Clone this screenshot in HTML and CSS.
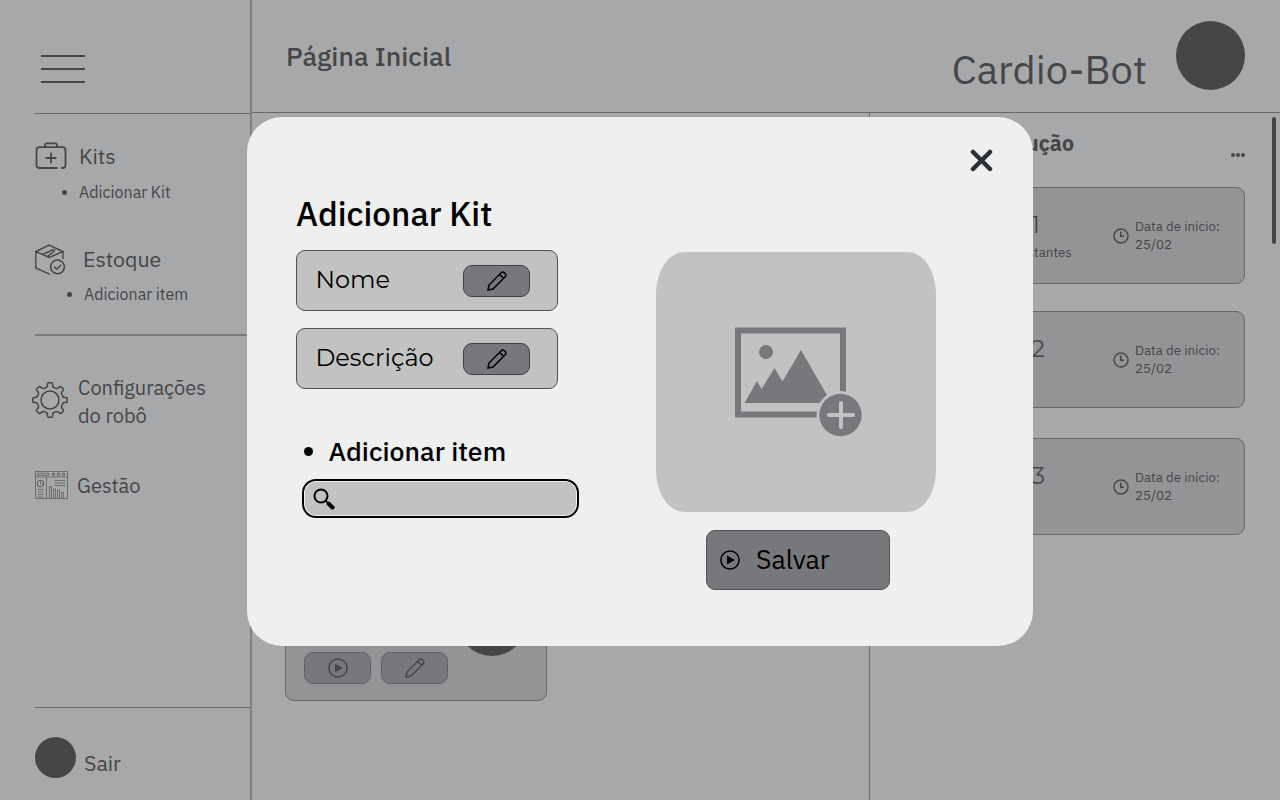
FILE: index.html
```html
<!DOCTYPE html>
<html lang="pt-BR">
<head>
<meta charset="utf-8">
<title>Cardio-Bot</title>
<link rel="stylesheet" href="styles.css">
</head>
<body>
<svg class="sprite" width="0" height="0" aria-hidden="true">
  <symbol id="pencil" viewBox="0 0 20 20"><path d="M1 19l1-5L14.2 1.8a2.2 2.2 0 0 1 3.2 0l.8.8a2.2 2.2 0 0 1 0 3.2L6 18l-5 1zM12.6 3.4l4 4"/></symbol>
  <symbol id="play" viewBox="0 0 20 20"><circle cx="10" cy="10" r="9.1"/><path class="solid" d="M7 5.6v8.8l8-4.4z"/></symbol>
  <symbol id="clock" viewBox="0 0 16 16"><circle cx="8" cy="8" r="7"/><path d="M7.8 3.6v4.6H11"/></symbol>
  <symbol id="tooth" overflow="visible"><path d="M-5-12.100Q-2.600-12.700-2.600-14.600V-16q0-1.200 1.200-1.200h2.800q1.200 0 1.200 1.200v1.400Q2.600-12.700 5-12.100"/></symbol>
</svg>
<div class="app">
  <aside class="sidebar">
    <div class="menu"><i></i><i></i><i></i></div>
    <nav class="group kits">
      <a class="entry"><svg class="ico" width="32" height="28" viewBox="0 0 32 28"><path d="M22.5 26H4.6C2.5 26 1.5 25 1.5 23V8.300C1.500 6 2.500 5.200 4.600 5.200h22.800c2.100 0 3.100.8 3.100 3.100V23c0 2-1 3-3.100 3H26M10 5V3.200C10 2 10.700 1.400 11.800 1.400h8.400c1.100 0 1.800.6 1.800 1.800V5M16 10.500v11M10.500 16h11" stroke-width="1.800"/></svg><span>Kits</span></a>
      <a class="sub"><span>Adicionar Kit</span></a>
    </nav>
    <nav class="group estoque">
      <a class="entry"><svg class="ico" width="32" height="32" viewBox="0 0 32 32"><path d="M28 15V7.500L14.200 1 .8 7.500V24L15 30.300M.8 7.500L14.200 13.500 28 7.500M7.500 10.500L21 4.300M12.500 12.500l7.500-6" stroke-width="1.400"/><circle cx="22.500" cy="22.800" r="6.900"/><path d="M19.200 22.800l2.500 2.500 4.500-4.500"/></svg><span>Estoque</span></a>
      <a class="sub"><span>Adicionar item</span></a>
    </nav>
    <nav class="group tools">
      <a class="entry config"><svg class="ico" width="36" height="36" viewBox="-18 -18 36 36"><use href="#tooth"/><use href="#tooth" transform="rotate(45)"/><use href="#tooth" transform="rotate(90)"/><use href="#tooth" transform="rotate(135)"/><use href="#tooth" transform="rotate(180)"/><use href="#tooth" transform="rotate(225)"/><use href="#tooth" transform="rotate(270)"/><use href="#tooth" transform="rotate(315)"/><circle r="9"/></svg><span>Configurações<br>do robô</span></a>
      <a class="entry gestao"><svg class="ico" width="33" height="28" viewBox="0 0 33 28"><path d="M.5.5h32v27H.500zM.5 6h32M11.500 6v21.500M2.500 2.300h11v2h-11zM14.500 27V15.500h2V27M18.500 27v-9h2v9M22.500 27v-8h2v8M26.500 27v-5.500h2V27M19.500 9.500h11M19.500 12h11M19.500 14.500h11M2.500 18.500h6M2.500 21h6M2.500 23.500h6M2.500 26h6M5.500 9.500v3.500h3.500" stroke-width=".6"/><circle cx="5.500" cy="12.500" r="3.300" stroke-width=".8"/><g stroke-width=".9"><circle cx="18.500" cy="3.300" r="1.200"/><circle cx="23.500" cy="3.300" r="1.200"/><circle cx="28.500" cy="3.300" r="1.200"/></g></svg><span>Gestão</span></a>
    </nav>
    <footer class="exit"><span class="dot"></span><span class="label">Sair</span></footer>
  </aside>
  <div class="main">
    <header class="top"><h1>Página Inicial</h1><span class="brand">Cardio-Bot</span><span class="avatar"></span></header>
    <div class="columns">
      <section class="board">
        <article class="kitcard">
          <span class="photo"></span>
          <div class="actions">
            <button class="chip"><svg width="20" height="20"><use href="#play"/></svg></button>
            <button class="chip"><svg width="20" height="20"><use href="#pencil"/></svg></button>
          </div>
        </article>
      </section>
      <section class="queue">
        <div class="queuehead"><h2>Em produção</h2><span class="dots"><i></i><i></i><i></i></span></div>
        <article class="job"><div class="name"><b class="first">Kit 1</b><small>Itens restantes</small></div><svg class="clk" width="16" height="16"><use href="#clock"/></svg><p>Data de início:<br>25/02</p></article>
        <article class="job"><div class="name"><b>Kit 2</b></div><svg class="clk" width="16" height="16"><use href="#clock"/></svg><p>Data de início:<br>25/02</p></article>
        <article class="job"><div class="name"><b>Kit 3</b></div><svg class="clk" width="16" height="16"><use href="#clock"/></svg><p>Data de início:<br>25/02</p></article>
      </section>
    </div>
  </div>
</div>
<div class="scroll"></div>
<div class="modal" role="dialog">
  <svg class="close" width="23" height="23" viewBox="0 0 23 23"><path d="M3 3l17 17M20 3L3 20"/></svg>
  <div class="form">
    <h2>Adicionar Kit</h2>
    <div class="field"><span>Nome</span><button class="chip"><svg width="20" height="20"><use href="#pencil"/></svg></button></div>
    <div class="field"><span>Descrição</span><button class="chip"><svg width="20" height="20"><use href="#pencil"/></svg></button></div>
    <h3><span>Adicionar item</span></h3>
    <div class="search"><div class="inner"><svg width="22" height="22" viewBox="0 0 22 22"><circle cx="8" cy="8" r="6.500" stroke-width="2"/><path d="M12.500 12.500l3 3" stroke-width="1.600"/><path d="M15.500 15.500l4 4" stroke-width="4" stroke-linecap="round"/></svg></div></div>
  </div>
  <div class="media">
    <div class="upload"><svg width="128" height="112" viewBox="0 0 128 112"><path d="M3 3.500h105v84H3z" fill="none" stroke="#77787c" stroke-width="6"/><circle cx="31" cy="25" r="7"/><path d="M9.500 76l12.500-22 4.500 8L39.500 41l8 13.500L66 23l30.500 53z"/><circle class="halo" cx="105.500" cy="88" r="24"/><circle cx="105.500" cy="88" r="21.200"/><path d="M106 76v24M94 88h24" stroke="#c2c2c2" stroke-width="4" stroke-linecap="round"/></svg></div>
    <button class="save"><svg width="20" height="20"><use href="#play"/></svg><span>Salvar</span></button>
  </div>
</div>
</body>
</html>
```
FILE: styles.css
```css
* { box-sizing: border-box; margin: 0; }
body { width: 1280px; height: 800px; overflow: hidden; background: #a7a8aa; color: #464648; font-family: "IBM Plex Sans", Roboto, sans-serif; position: relative; }
svg { fill: none; stroke: currentColor; stroke-width: 1.500; flex: none; display: block; }
.sprite { position: absolute; }
.solid { fill: currentColor; stroke: none; }
button { font: inherit; color: inherit; padding: 0; }
.app { display: grid; grid-template-columns: 252px 1fr; height: 800px; }
.sidebar { border-right: 2px solid #7f8082; padding-left: 35px; display: flex; flex-direction: column; }
.menu { height: 114px; border-bottom: 1px solid #68686a; padding: 55px 0 0 6px; display: flex; flex-direction: column; gap: 11px; }
.menu i { width: 44px; height: 2px; background: #464648; }
.entry { display: flex; align-items: center; }
.entry, .exit { font-size: 21.330px; }
.sub { display: flex; align-items: center; font-size: 16px; line-height: 20px; }
.sub::before { content: ""; width: 5px; height: 5px; border-radius: 50%; background: #464648; margin-right: 12px; }
.kits { height: 130px; padding-top: 27px; }
.kits .entry { gap: 12px; height: 30px; }
.kits .sub { padding: 11px 0 0 27px; }
.estoque { height: 92px; border-bottom: 2px solid #7a7b7d; }
.estoque .entry { gap: 16px; height: 32px; }
.estoque .entry span { margin-top: -3px; }
.estoque .ico { margin-top: -1px; }
.estoque .sub { padding: 8px 0 0 32px; }
.tools { height: 372px; padding-top: 38px; border-bottom: 1px solid #68686a; }
.config { margin-left: -3px; gap: 10px; line-height: 28px; font-size: 20px; }
.config .ico { margin-top: -5px; }
.gestao { margin-top: 41px; gap: 9px; font-size: 20px; line-height: 30px; }
.gestao .ico { margin-top: -2px; }
.exit { display: flex; gap: 8px; padding-top: 29px; }
.exit .dot { width: 41px; height: 41px; border-radius: 50%; background: #464648; }
.exit .label { padding-top: 12px; }
.main { display: flex; flex-direction: column; }
.top { height: 113px; border-bottom: 1px solid #68686a; display: flex; padding-left: 34px; }
.top h1 { font-size: 26.670px; font-weight: 500; line-height: 32px; padding-top: 40px; flex: 1; }
.brand { font-size: 40px; font-weight: 400; line-height: 48px; padding-top: 45px; }
.avatar { width: 69px; height: 69px; border-radius: 50%; background: #464648; margin: 21px 35px 0 29px; }
.columns { display: flex; flex: 1; }
.board { width: 618px; border-right: 1px solid #68686a; padding: 457px 0 0 33px; }
.kitcard { width: 262px; height: 131px; border: 1px solid #68686a; border-radius: 9px; background: #949496; padding: 15px 18px; display: flex; flex-direction: column; }
.photo { width: 70px; height: 70px; border-radius: 50%; background: #464648; margin-left: 153px; flex: none; }
.actions { display: flex; gap: 10px; margin-top: -4px; }
.chip { width: 67px; height: 32px; border: 1px solid #606164; border-radius: 9px; background: #77787c; display: grid; place-items: center; }
.queue { flex: 1; padding: 0 35px 0 0; }
.queuehead { height: 74px; display: flex; justify-content: space-between; }
.queuehead h2 { width: 204px; text-align: right; font-size: 21.330px; font-weight: 700; line-height: 28px; padding-top: 16px; }
.dots { display: flex; gap: 1px; padding-top: 40px; }
.dots i { width: 4px; height: 4px; border-radius: 50%; background: #464648; }
.job { margin: 0 0 27px 20px; height: 97px; border: 1px solid #68686a; border-radius: 9px; background: #949496; display: flex; }
.job:nth-of-type(2) { margin-bottom: 30px; }
.name { width: 180px; padding: 23px 0 0 90px; }
.name b { display: block; font: 400 24px/28px Montserrat, Inter, sans-serif; width: 64px; text-align: right; }
.name .first { width: 59px; }
.name small { display: block; font-size: 13.330px; line-height: 18px; padding-top: 4px; white-space: nowrap; width: 90px; text-align: right; }
.clk { margin: 39.500px 6px 0 42px; }
.job p { font-size: 13.330px; line-height: 18px; padding-top: 29px; white-space: nowrap; }
.scroll { position: absolute; left: 1272px; top: 117px; width: 4px; height: 127px; border-radius: 2px; background: #464648; }
.modal { position: absolute; left: 247px; top: 117px; width: 786px; height: 529px; border-radius: 35px; background: #efefef; color: #000; display: flex; }
.close { position: absolute; right: 40px; top: 32px; color: #263035; stroke-width: 4.500; stroke-linecap: round; }
.form { padding: 76px 0 0 49px; width: 409px; }
.form h2 { font-size: 33.330px; font-weight: 500; line-height: 42px; margin-bottom: 15px; }
.field { width: 262px; height: 61px; border: 1px solid #505050; border-radius: 9px; background: #c2c2c2; display: flex; justify-content: space-between; align-items: center; padding: 0 27px 0 18.500px; margin-bottom: 17px; font: 400 24px/30px Montserrat, Inter, sans-serif; }
.field span { margin-top: -2px; }
.field .chip { border-color: #404143; }
.form h3 { font-size: 26.670px; font-weight: 500; line-height: 34px; display: flex; align-items: center; padding: 28px 0 0 8px; }
.form h3::before { content: ""; width: 9px; height: 9px; border-radius: 50%; background: #000; margin-right: 15.500px; }
.search { width: 277px; height: 39px; margin: 11px 0 0 6px; border: 2px solid #000; border-radius: 14px; padding: 1px; }
.inner { height: 100%; border-radius: 11px; background: #c2c2c2; padding: 6px 0 0 8px; }
.media { padding-top: 135px; }
.upload { width: 280px; height: 260px; border-radius: 28px / 42px; background: #c2c2c2; display: flex; padding: 75px 0 0 79px; }
.upload svg { fill: #77787c; stroke: none; }
.upload .halo { fill: #c2c2c2; }
.save { width: 184px; height: 60px; border: 1px solid #505050; border-radius: 9px; background: #77787c; margin: 18px 0 0 50px; display: flex; align-items: center; gap: 16px; padding-left: 13px; font-size: 26.670px; }
.save span { margin-top: -2px; }
```
